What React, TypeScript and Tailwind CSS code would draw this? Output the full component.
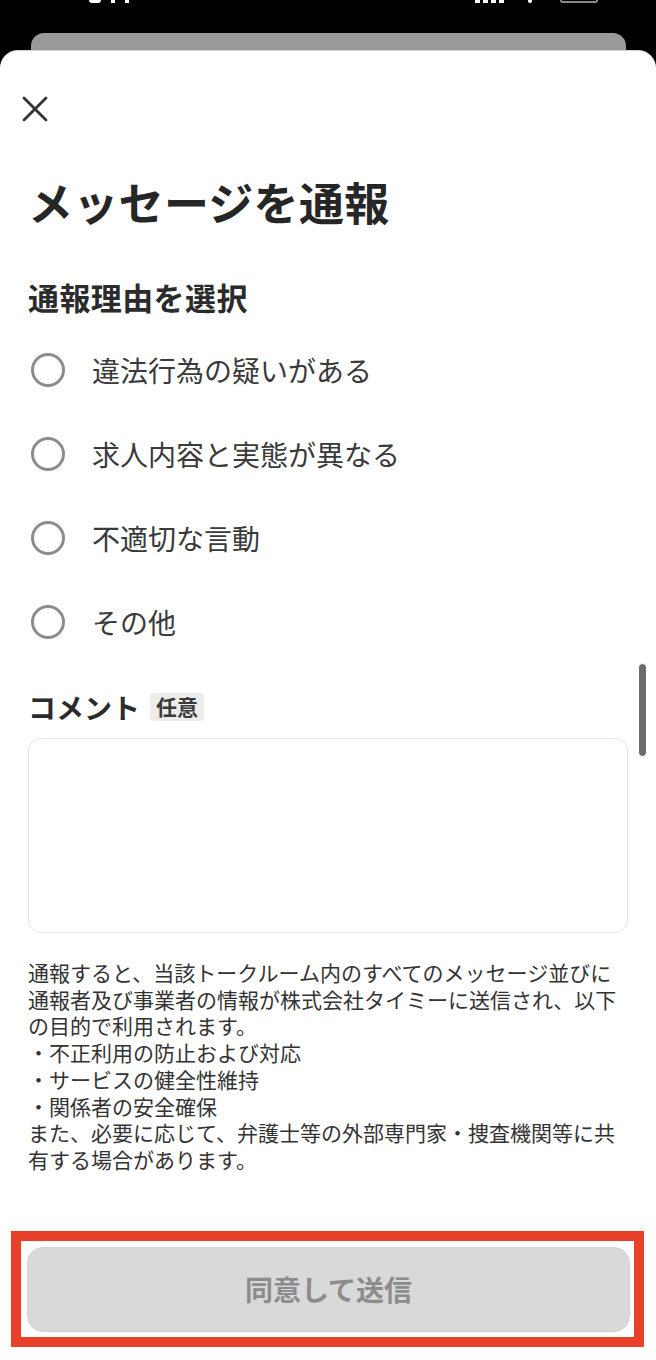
import React from "react";

const FONT = { fontFamily: '"Noto Sans CJK JP", "Noto Sans", sans-serif' };

const options = [
  "違法行為の疑いがある",
  "求人内容と実態が異なる",
  "不適切な言動",
  "その他",
];

const disclaimer = [
  "通報すると、当該トークルーム内のすべてのメッセージ並びに",
  "通報者及び事業者の情報が株式会社タイミーに送信され、以下",
  "の目的で利用されます。",
  "・不正利用の防止および対応",
  "・サービスの健全性維持",
  "・関係者の安全確保",
  "また、必要に応じて、弁護士等の外部専門家・捜査機関等に共",
  "有する場合があります。",
];

export default function App() {
  return (
    <div className="w-[656px] h-[1360px] bg-black overflow-hidden flex flex-col" style={FONT}>
      {/* status bar remnants */}
      <div className="h-[4px] flex items-start overflow-hidden">
        <div className="ml-[89px] flex gap-[10px]">
          <div className="w-[12px] h-[3px] rounded-b-full bg-white" />
          <div className="w-[4px] h-[3px] bg-white" />
          <div className="w-[4px] h-[3px] bg-white" />
        </div>
        <div className="ml-auto flex items-start gap-[3px]">
          <div className="w-[5px] h-[3px] bg-white" />
          <div className="w-[5px] h-[3px] bg-white" />
          <div className="w-[5px] h-[3px] bg-white" />
          <div className="w-[5px] h-[3px] bg-white" />
        </div>
        <div className="ml-[24px] w-[4px] h-[3px] bg-white rounded-b-full" />
        <div className="ml-[28px] mr-[58px] w-[38px] h-[3px] border-b-[2px] border-x-[2px] border-[#8a8a8a] rounded-b-[4px]" />
      </div>
      {/* background sheet peek */}
      <div className="pt-[29px] px-[31px]">
        <div className="h-[18px] w-[595px] bg-[#9a9a9a] rounded-t-[13px]" />
      </div>
      {/* sheet */}
      <div className="relative flex-1 bg-white rounded-t-[18px] shadow-[0_-1px_0_#d4d4d4] px-[28px] flex flex-col">
        <div className="pt-[45px]">
          <svg width="26" height="26" viewBox="0 0 26 26" className="-ml-[6px]">
            <path d="M2 2L24 24M24 2L2 24" stroke="#333" strokeWidth="2.8" strokeLinecap="round" />
          </svg>
        </div>
        <h1 className="mt-[52px] text-[45px] leading-[56px] font-bold text-[#262626] tracking-[0.3px]">
          メッセージを通報
        </h1>
        <h2 className="mt-[47px] text-[31px] leading-[40px] font-bold text-[#2b2b2b] tracking-[0.4px]">
          通報理由を選択
        </h2>
        <div className="mt-[11px] flex flex-col">
          {options.map((o) => (
            <div key={o} className="h-[84px] flex items-center">
              <div className="w-[34px] h-[34px] ml-[3px] rounded-full border-[3px] border-[#8c8c8c]" />
              <span className="ml-[27px] text-[28px] leading-[40px] text-[#3a3a3a]">{o}</span>
            </div>
          ))}
        </div>
        <div className="mt-[23px] h-[40px] flex items-center">
          <span className="text-[28px] font-bold text-[#2b2b2b]">コメント</span>
          <span className="ml-[10px] h-[28px] px-[6px] flex items-center bg-[#ececec] rounded-[4px] text-[21px] font-bold text-[#3a3a3a]">
            任意
          </span>
        </div>
        <div className="mt-[11px] h-[195px] w-[600px] border border-[#e4e4e4] rounded-[13px]" />
        <p className="mt-[26px] text-[21px] leading-[26.7px] text-[#333] whitespace-nowrap">
          {disclaimer.map((l, i) => (
            <React.Fragment key={l}>
              {l}
              {i < disclaimer.length - 1 && <br />}
            </React.Fragment>
          ))}
        </p>
        <div className="mt-[74px] -ml-[1px] h-[85px] w-[603px] bg-[#d9d9d9] border border-[#d2d2d2] rounded-[16px] flex items-center justify-center">
          <span className="text-[28px] font-bold text-[#8c8c8c]">同意して送信</span>
        </div>
        {/* scrollbar */}
        <div className="absolute left-[638px] top-[612px] w-[9px] h-[94px] rounded-full bg-[#6b6b6b] border border-white" />
        {/* annotation frame */}
        <div className="absolute left-[11px] top-[1180px] w-[633px] h-[116px] border-[10px] border-[#e8412a]" />
      </div>
    </div>
  );
}
